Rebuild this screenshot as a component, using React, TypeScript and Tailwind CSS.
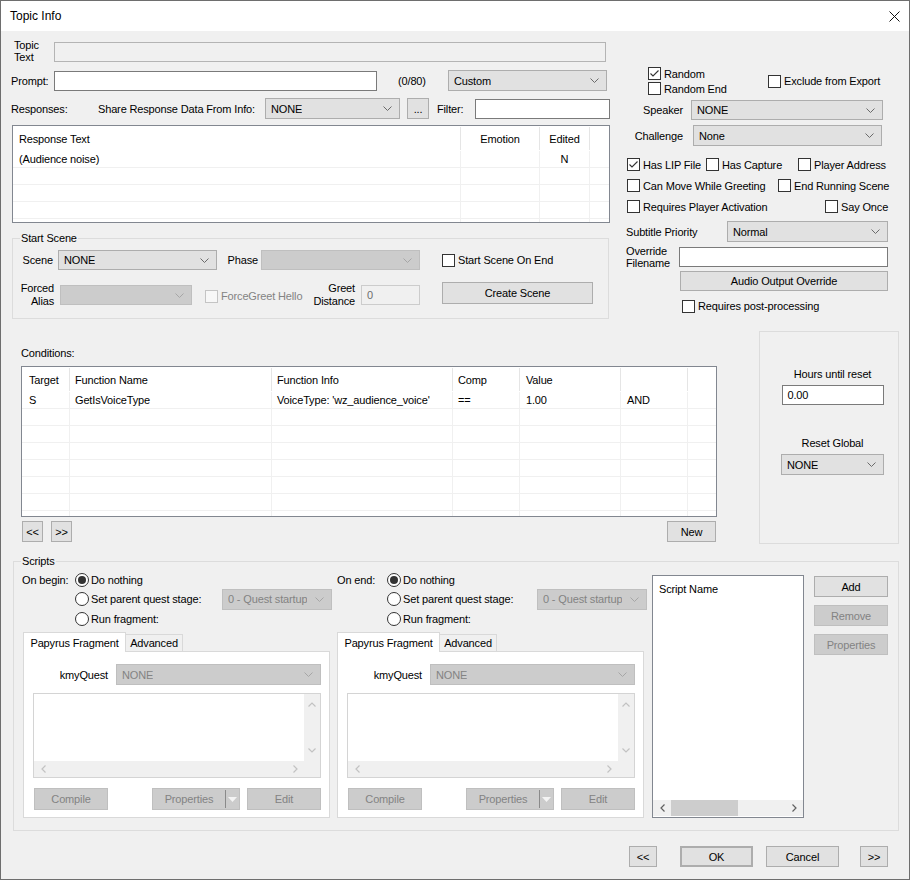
import React from 'react';

type Cls = { className?: string };

const Chevron = ({ color }: { color: string }) => (
  <svg width="9" height="5" viewBox="0 0 9 5" className="shrink-0">
    <polyline points="0.5,0.5 4.5,4.5 8.5,0.5" fill="none" stroke={color} />
  </svg>
);

// small scrollbar arrows
const Arrow = ({ dir, color }: { dir: 'up' | 'down' | 'left' | 'right'; color: string }) => {
  const pts = {
    up: '0.5,4.5 4,1 7.5,4.5',
    down: '0.5,0.5 4,4 7.5,0.5',
    left: '4.5,0.5 1,4 4.5,7.5',
    right: '0.5,0.5 4,4 0.5,7.5',
  }[dir];
  const vert = dir === 'up' || dir === 'down';
  return (
    <svg width={vert ? 8 : 5} height={vert ? 5 : 8} viewBox={vert ? '0 0 8 5' : '0 0 5 8'}>
      <polyline points={pts} fill="none" stroke={color} strokeWidth="1.2" />
    </svg>
  );
};

function Combo({ value = '', disabled = false, className = '' }: Cls & { value?: string; disabled?: boolean }) {
  return (
    <div
      className={`flex shrink-0 items-center justify-between border pl-[5px] pr-[7px] ${
        disabled ? 'border-[#bfbfbf] bg-[#cccccc] text-[#838383]' : 'border-[#adadad] bg-[#e1e1e1]'
      } ${className}`}
    >
      <span className="truncate">{value}</span>
      <Chevron color={disabled ? '#a6a6a6' : '#6a6a6a'} />
    </div>
  );
}

function TextBox({ value = '', className = '' }: Cls & { value?: string }) {
  return (
    <div className={`flex shrink-0 items-center border border-[#7a7a7a] bg-white px-[5px] ${className}`}>{value}</div>
  );
}

function Btn({ children, disabled = false, className = '' }: Cls & { children?: React.ReactNode; disabled?: boolean }) {
  return (
    <div
      className={`flex shrink-0 items-center justify-center border ${
        disabled ? 'border-[#bfbfbf] bg-[#cccccc] text-[#838383]' : 'border-[#adadad] bg-[#e1e1e1]'
      } ${className}`}
    >
      {children}
    </div>
  );
}

function Check({ label, checked = false, disabled = false, className = '' }: Cls & { label: string; checked?: boolean; disabled?: boolean }) {
  return (
    <div className={`flex shrink-0 items-center ${className}`}>
      <span
        className={`flex h-[13px] w-[13px] shrink-0 items-center justify-center border ${
          disabled ? 'border-[#c4c4c4] bg-[#f7f7f7]' : 'border-[#333333] bg-white'
        }`}
      >
        {checked && (
          <svg width="11" height="11" viewBox="0 0 11 11">
            <polyline points="1.5,5.5 4,8 9.5,2.5" fill="none" stroke="#333333" strokeWidth="1.1" />
          </svg>
        )}
      </span>
      <span className={`ml-[3px] whitespace-nowrap ${disabled ? 'text-[#838383]' : ''}`}>{label}</span>
    </div>
  );
}

function Radio({ label, checked = false, className = '' }: Cls & { label: string; checked?: boolean }) {
  return (
    <div className={`flex shrink-0 items-center ${className}`}>
      <span className="flex h-[14px] w-[14px] shrink-0 items-center justify-center rounded-full border border-[#333333] bg-white">
        {checked && <span className="h-[8px] w-[8px] rounded-full bg-[#333333]" />}
      </span>
      <span className="ml-[2px] whitespace-nowrap">{label}</span>
    </div>
  );
}

function GroupLabel({ children }: { children: React.ReactNode }) {
  return <span className="absolute -top-[8px] left-[7px] bg-[#f0f0f0] px-[1px] leading-[14px]">{children}</span>;
}

const condCols = ['w-[48px] pl-[7px]', 'w-[202px] pl-[5px]', 'w-[181px] pl-[5px]', 'w-[67px] pl-[5px]', 'w-[101px] pl-[6px]', 'w-[67px] pl-[6px]'];
const condHead = ['Target', 'Function Name', 'Function Info', 'Comp', 'Value', ''];
const condRows = [
  ['S', 'GetIsVoiceType', "VoiceType: 'wz_audience_voice'", '==', '1.00', 'AND'],
  ['', '', '', '', '', ''],
  ['', '', '', '', '', ''],
  ['', '', '', '', '', ''],
  ['', '', '', '', '', ''],
  ['', '', '', '', '', ''],
  ['', '', '', '', '', ''],
  ['', '', '', '', '', ''],
];

function ScriptColumn({ title, labelW, radioW, tabOffset }: { title: string; labelW: string; radioW: string; tabOffset: string }) {
  return (
    <div className="flex w-[315px] shrink-0 flex-col">
      <div className="mt-[8px] flex h-[19px] items-center">
        <div className={labelW}>{title}</div>
        <Radio label="Do nothing" checked />
      </div>
      <div className="flex h-[20px] items-center">
        <div className={labelW} />
        <Radio label="Set parent quest stage:" className={radioW} />
        <Combo value="0 - Quest startup" disabled className="h-[21px] w-[110px]" />
      </div>
      <div className="flex h-[19px] items-center">
        <div className={labelW} />
        <Radio label="Run fragment:" />
      </div>

      <div className={`mt-[4px] flex flex-col ${tabOffset}`}>
        <div className="flex h-[19px] items-end">
          <div className="relative z-10 -mb-[1px] flex h-[20px] w-[103px] items-center justify-center border border-b-0 border-[#d9d9d9] bg-white">
            Papyrus Fragment
          </div>
          <div className="flex h-[17px] w-[57px] items-center justify-center border border-b-0 border-l-0 border-[#d9d9d9] bg-[#f0f0f0]">
            Advanced
          </div>
        </div>
        <div className="flex h-[167px] w-[307px] flex-col border border-[#d9d9d9] bg-white">
          <div className="mt-[12px] flex h-[21px] items-center">
            <div className="w-[92px] pr-[8px] text-right">kmyQuest</div>
            <Combo value="NONE" disabled className="h-[21px] w-[205px]" />
          </div>
          <div className="ml-[9px] mt-[8px] flex h-[85px] w-[288px] flex-col border border-[#d4d4d4]">
            <div className="flex flex-1">
              <div className="flex-1 bg-white" />
              <div className="flex w-[16px] flex-col items-center justify-between bg-[#f0f0f0] py-[8px]">
                <Arrow dir="up" color="#c2c2c2" />
                <Arrow dir="down" color="#c2c2c2" />
              </div>
            </div>
            <div className="flex h-[16px] items-center bg-[#f0f0f0]">
              <div className="flex w-[18px] justify-center">
                <Arrow dir="left" color="#c2c2c2" />
              </div>
              <div className="flex-1" />
              <div className="flex w-[18px] justify-center">
                <Arrow dir="right" color="#c2c2c2" />
              </div>
              <div className="w-[16px]" />
            </div>
          </div>
          <div className="ml-[10px] mt-[10px] flex h-[22px]">
            <Btn disabled className="h-[22px] w-[74px]">Compile</Btn>
            <div className="ml-[44px] flex h-[22px] w-[88px] items-center border border-[#bfbfbf] bg-[#cccccc] text-[#838383]">
              <span className="flex-1 text-center">Properties</span>
              <span className="h-[18px] w-px bg-[#8a8a8a]" />
              <span className="flex w-[13px] justify-center">
                <svg width="9" height="5" viewBox="0 0 9 5">
                  <polygon points="0,0 9,0 4.5,5" fill="#f4f4f4" />
                </svg>
              </span>
            </div>
            <Btn disabled className="ml-[7px] h-[22px] w-[74px]">Edit</Btn>
          </div>
        </div>
      </div>
    </div>
  );
}

export default function App() {
  return (
    <div className="flex h-[880px] w-[910px] flex-col overflow-hidden border border-[#6e6e6e] bg-[#f0f0f0] font-['Liberation_Sans',Arial,sans-serif] text-[11px] leading-[14px] tracking-[-0.15px] text-black">
      {/* title bar */}
      <div className="flex h-[30px] shrink-0 items-center justify-between bg-white pl-[9px] pr-[9px] text-[12px] tracking-normal">
        <span>Topic Info</span>
        <svg width="11" height="11" viewBox="0 0 11 11">
          <path d="M0.5 0.5 L10.5 10.5 M10.5 0.5 L0.5 10.5" stroke="#111" strokeWidth="1" />
        </svg>
      </div>

      {/* top section */}
      <div className="flex h-[289px] shrink-0">
        <div className="ml-[10px] flex w-[599px] flex-col">
          <div className="mt-[7px] flex h-[24px]">
            <div className="w-[43px] pl-[3px] pt-[1px] leading-[12px]">
              Topic
              <br />
              Text
            </div>
            <div className="mt-[4px] h-[20px] w-[552px] border border-[#b4b4b4] bg-[#f0f0f0]" />
          </div>

          <div className="mt-[8px] flex h-[21px] items-center">
            <div className="w-[43px]">Prompt:</div>
            <TextBox className="h-[20px] w-[323px]" />
            <span className="ml-[21px] w-[50px]">(0/80)</span>
            <Combo value="Custom" className="h-[21px] w-[159px]" />
          </div>

          <div className="mt-[7px] flex h-[21px] items-center">
            <div className="w-[87px]">Responses:</div>
            <div className="w-[167px] whitespace-nowrap">Share Response Data From Info:</div>
            <Combo value="NONE" className="h-[21px] w-[135px]" />
            <Btn className="ml-[7px] h-[21px] w-[22px]">...</Btn>
            <span className="ml-[8px] w-[38px]">Filter:</span>
            <TextBox className="h-[20px] w-[135px]" />
          </div>

          {/* responses list */}
          <div className="ml-[1px] mt-[6px] flex h-[98px] w-[598px] flex-col overflow-hidden border border-[#828790] bg-white">
            <div className="flex h-[25px] shrink-0 items-center">
              <div className="flex h-[23px] w-[448px] items-center border-r border-[#e5e5e5] pl-[6px]">Response Text</div>
              <div className="flex h-[23px] w-[79px] items-center justify-center border-r border-[#e5e5e5]">Emotion</div>
              <div className="flex h-[23px] w-[50px] items-center justify-center border-r border-[#e5e5e5]">Edited</div>
              <div className="flex-1" />
            </div>
            {['(Audience noise)', '', '', '', ''].map((t, i) => (
              <div key={i} className="flex h-[17px] shrink-0 border-b border-[#f0f0f0]">
                <div className="flex w-[448px] items-center border-r border-[#f0f0f0] pl-[6px]">{t}</div>
                <div className="w-[79px] border-r border-[#f0f0f0]" />
                <div className="flex w-[50px] items-center justify-center border-r border-[#f0f0f0]">{i === 0 ? 'N' : ''}</div>
                <div className="flex-1" />
              </div>
            ))}
          </div>

          {/* start scene */}
          <div className="relative ml-[1px] mt-[15px] h-[81px] w-[597px] shrink-0 border border-[#dcdcdc]">
            <GroupLabel>Start Scene</GroupLabel>
            <div className="mt-[11px] flex h-[20px] items-center">
              <div className="w-[45px] pr-[5px] text-right">Scene</div>
              <Combo value="NONE" className="h-[20px] w-[159px]" />
              <div className="w-[44px] pr-[3px] text-right">Phase</div>
              <Combo disabled className="h-[20px] w-[159px]" />
              <Check label="Start Scene On End" className="ml-[22px]" />
            </div>
            <div className="mt-[11px] flex h-[26px] items-start">
              <div className="w-[41px] pt-[1px] text-right leading-[13px]">
                Forced
                <br />
                Alias
              </div>
              <Combo disabled className="ml-[6px] mt-[4px] h-[20px] w-[132px]" />
              <Check label="ForceGreet Hello" disabled className="ml-[13px] mt-[8px] w-[107px]" />
              <div className="w-[43px] pt-[1px] text-right leading-[13px]">
                Greet
                <br />
                Distance
              </div>
              <div className="ml-[6px] mt-[4px] flex h-[20px] w-[59px] items-center border border-[#cccccc] bg-[#f0f0f0] px-[5px] text-[#6d6d6d]">
                0
              </div>
              <Btn className="ml-[22px] mt-[1px] h-[22px] w-[151px]">Create Scene</Btn>
            </div>
          </div>
        </div>

        {/* right column */}
        <div className="ml-[12px] flex w-[270px] flex-col">
          <div className="mt-[35px] flex items-center">
            <div className="ml-[26px] flex w-[120px] flex-col">
              <Check label="Random" checked className="h-[15px]" />
              <Check label="Random End" className="h-[15px]" />
            </div>
            <Check label="Exclude from Export" />
          </div>
          <div className="mt-[4px] flex h-[20px] items-center">
            <div className="w-[69px] pr-[8px] text-right">Speaker</div>
            <Combo value="NONE" className="h-[20px] w-[192px]" />
          </div>
          <div className="mt-[5px] flex h-[21px] items-center">
            <div className="w-[71px] pr-[10px] text-right">Challenge</div>
            <Combo value="None" className="h-[21px] w-[189px]" />
          </div>
          <div className="ml-[5px] mt-[8px] flex h-[21px] items-center">
            <Check label="Has LIP File" checked className="w-[79px]" />
            <Check label="Has Capture" className="w-[92px]" />
            <Check label="Player Address" />
          </div>
          <div className="ml-[5px] flex h-[21px] items-center">
            <Check label="Can Move While Greeting" className="w-[151px]" />
            <Check label="End Running Scene" />
          </div>
          <div className="ml-[5px] flex h-[21px] items-center">
            <Check label="Requires Player Activation" className="w-[198px]" />
            <Check label="Say Once" />
          </div>
          <div className="mt-[4px] flex h-[21px] items-center">
            <div className="ml-[4px] w-[101px]">Subtitle Priority</div>
            <Combo value="Normal" className="h-[21px] w-[161px]" />
          </div>
          <div className="mt-[3px] flex h-[22px]">
            <div className="ml-[4px] w-[53px] leading-[12px]">
              Override
              <br />
              Filename
            </div>
            <TextBox className="mt-[2px] h-[20px] w-[209px]" />
          </div>
          <Btn className="ml-[58px] mt-[4px] h-[20px] w-[208px]">Audio Output Override</Btn>
          <Check label="Requires post-processing" className="ml-[60px] mt-[7px] h-[16px]" />
        </div>
      </div>

      {/* conditions */}
      <div className="mt-[11px] flex h-[214px] shrink-0">
        <div className="ml-[20px] flex w-[696px] flex-col">
          <div className="mt-[15px] h-[15px] leading-[15px]">Conditions:</div>
          <div className="mt-[5px] flex h-[151px] w-[696px] flex-col overflow-hidden border border-[#828790] bg-white">
            <div className="flex h-[25px] shrink-0 items-center">
              {condHead.map((h, i) => (
                <div key={i} className={`flex h-[23px] items-center border-r border-[#e5e5e5] ${condCols[i]}`}>
                  {h}
                </div>
              ))}
              <div className="flex-1" />
            </div>
            {condRows.map((r, ri) => (
              <div key={ri} className="flex h-[17px] shrink-0 border-b border-[#f0f0f0]">
                {r.map((c, ci) => (
                  <div key={ci} className={`flex items-center whitespace-nowrap border-r border-[#f0f0f0] ${condCols[ci]}`}>
                    {c}
                  </div>
                ))}
                <div className="flex-1" />
              </div>
            ))}
          </div>
          <div className="mt-[4px] flex h-[21px]">
            <Btn className="ml-[1px] h-[21px] w-[21px]">&lt;&lt;</Btn>
            <Btn className="ml-[8px] h-[21px] w-[21px]">&gt;&gt;</Btn>
            <Btn className="ml-auto mr-[1px] h-[21px] w-[49px]">New</Btn>
          </div>
        </div>

        <div className="ml-[42px] flex h-[213px] w-[140px] flex-col border border-[#dcdcdc]">
          <div className="ml-[21px] flex w-[103px] flex-col items-center">
            <div className="mt-[35px]">Hours until reset</div>
            <TextBox value="0.00" className="mt-[4px] h-[20px] w-[102px]" />
            <div className="mt-[31px]">Reset Global</div>
            <Combo value="NONE" className="mt-[4px] h-[21px] w-[103px]" />
          </div>
        </div>
      </div>

      {/* scripts */}
      <div className="relative ml-[12px] mt-[16px] flex h-[270px] w-[886px] shrink-0 border border-[#dcdcdc]">
        <GroupLabel>Scripts</GroupLabel>
        <div className="ml-[8px] flex">
          <ScriptColumn title="On begin:" labelW="w-[53px] shrink-0" radioW="w-[147px]" tabOffset="ml-[1px]" />
          <ScriptColumn title="On end:" labelW="w-[50px] shrink-0" radioW="w-[150px]" tabOffset="ml-0" />
        </div>
        <div className="mt-[13px] flex h-[243px] w-[152px] flex-col border border-[#828790] bg-white">
          <div className="mt-[6px] pl-[6px]">Script Name</div>
          <div className="mb-[1px] mt-auto flex h-[16px] items-center bg-[#f0f0f0]">
            <div className="flex w-[18px] justify-center">
              <Arrow dir="left" color="#606060" />
            </div>
            <div className="h-[16px] w-[67px] bg-[#cdcdcd]" />
            <div className="flex-1" />
            <div className="flex w-[18px] justify-center">
              <Arrow dir="right" color="#606060" />
            </div>
          </div>
        </div>
        <div className="ml-[10px] mt-[14px] flex flex-col">
          <Btn className="h-[21px] w-[74px]">Add</Btn>
          <Btn disabled className="mt-[8px] h-[21px] w-[74px]">Remove</Btn>
          <Btn disabled className="mt-[8px] h-[21px] w-[74px]">Properties</Btn>
        </div>
      </div>

      {/* bottom buttons */}
      <div className="mt-[15px] flex h-[21px] shrink-0">
        <Btn className="ml-[628px] h-[21px] w-[28px]">&lt;&lt;</Btn>
        <Btn className="ml-[23px] h-[21px] w-[73px] border-2 border-[#0078d7]">OK</Btn>
        <Btn className="ml-[13px] h-[21px] w-[73px]">Cancel</Btn>
        <Btn className="ml-[21px] h-[21px] w-[28px]">&gt;&gt;</Btn>
      </div>
    </div>
  );
}
